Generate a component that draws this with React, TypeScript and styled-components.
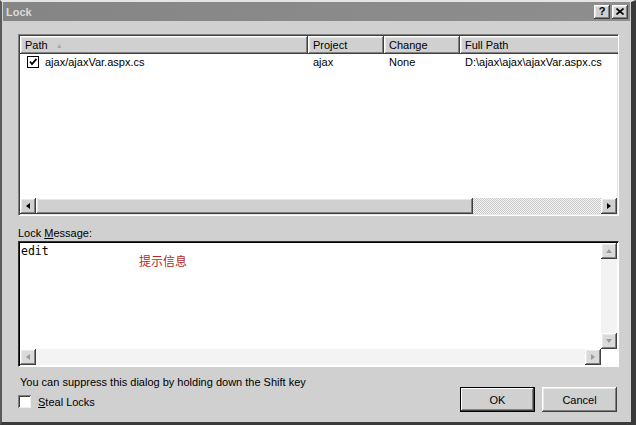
import React from "react";
import styled, { createGlobalStyle } from "styled-components";

const Global = createGlobalStyle`
  html, body { margin: 0; padding: 0; background: #d0d0d0; overflow: hidden; }
  * { box-sizing: border-box; }
`;

const FACE = "#d0d0d0";
const SHADOW = "#808080";
const DARK = "#404040";
const LIGHT = "#ffffff";
const FONT = `"Liberation Sans", Arial, sans-serif`;

const raised = `
  box-shadow: inset -1px -1px ${DARK}, inset 1px 1px ${LIGHT}, inset -2px -2px ${SHADOW}, inset 2px 2px #e8e8e8;
`;

const Window = styled.div`
  width: 636px;
  height: 425px;
  background: ${FACE};
  border-top: 2px solid #e4e4e4;
  border-left: 2px solid #5a5a5a;
  border-right: 5px solid #3a3a3a;
  border-bottom: 3px solid #3a3a3a;
  display: flex;
  flex-direction: column;
  font-family: ${FONT};
  font-size: 11px;
  color: #000;
`;

const TitleBar = styled.div`
  height: 19px;
  margin: 0 1px 0 1px;
  background: linear-gradient(to right, #858585, #8e8e8e);
  display: flex;
  align-items: center;
  padding: 0 2px 0 3px;
`;

const TitleText = styled.div`
  flex: 1;
  color: #dadada;
  font-weight: bold;
  font-size: 11px;
`;

const TitleButton = styled.div<{ $gap?: boolean }>`
  width: 16px;
  height: 14px;
  background: ${FACE};
  ${raised}
  margin-left: ${(p) => (p.$gap ? 2 : 0)}px;
  display: flex;
  align-items: center;
  justify-content: center;
  font-weight: bold;
  font-size: 11px;
  line-height: 1;
  color: #000;
`;

const Content = styled.div`
  flex: 1;
  display: flex;
  flex-direction: column;
  padding: 13px 11px 0 16px;
`;

const Sunken = styled.div`
  border: 1px solid;
  border-color: ${SHADOW} ${LIGHT} ${LIGHT} ${SHADOW};
  box-shadow: inset 1px 1px ${DARK}, inset -1px -1px #e6e6e6;
  background: #fff;
  padding: 1px;
  display: flex;
  flex-direction: column;
  overflow: hidden;
`;

const ListView = styled(Sunken)`
  width: 601px;
  height: 182px;
`;

const Header = styled.div`
  display: flex;
  height: 18px;
  flex-shrink: 0;
`;

const HeaderCell = styled.div<{ $w: number }>`
  width: ${(p) => p.$w}px;
  flex-shrink: 0;
  background: ${FACE};
  ${raised}
  padding: 0 5px;
  display: flex;
  align-items: center;
  gap: 8px;
  color: #000;
`;

const SortArrow = styled.span`
  color: #a8a8a8;
  font-size: 7px;
  line-height: 1;
`;

const Rows = styled.div`
  flex: 1;
  background: #fff;
`;

const Row = styled.div`
  display: flex;
  height: 15px;
  align-items: center;
`;

const Cell = styled.div<{ $w: number; $pad?: number }>`
  width: ${(p) => p.$w}px;
  flex-shrink: 0;
  padding-left: ${(p) => p.$pad ?? 5}px;
  display: flex;
  align-items: center;
  white-space: nowrap;
`;

const CheckBox = styled.div<{ $sunken?: boolean }>`
  width: 12px;
  height: 12px;
  background: #fff;
  border: ${(p) => (p.$sunken ? "none" : "1px solid #000")};
  ${(p) =>
    p.$sunken
      ? `width:13px;height:13px;box-shadow: inset 1px 1px ${SHADOW}, inset -1px -1px #eeeeee, inset 2px 2px ${DARK};`
      : ""}
  display: flex;
  align-items: center;
  justify-content: center;
  flex-shrink: 0;
`;

const HScroll = styled.div`
  height: 16px;
  display: flex;
  flex-shrink: 0;
`;

const VScroll = styled.div`
  width: 16px;
  display: flex;
  flex-direction: column;
  flex-shrink: 0;
`;

const ArrowBtn = styled.div<{ $dim?: boolean }>`
  width: 16px;
  height: 16px;
  flex-shrink: 0;
  background: ${(p) => (p.$dim ? "#dadada" : FACE)};
  ${raised}
  display: flex;
  align-items: center;
  justify-content: center;
`;

const Thumb = styled.div<{ $w: number }>`
  width: ${(p) => p.$w}px;
  background: ${FACE};
  ${raised}
  flex-shrink: 0;
`;

const Dither = styled.div`
  flex: 1;
  background: repeating-conic-gradient(#c8c8c8 0 25%, #f4f4f4 0 50%) 0 0 / 2px 2px;
`;

const PaleTrack = styled.div`
  flex: 1;
  background: #f3f3f3;
`;

const Label = styled.div`
  margin-top: 9px;
  height: 16px;
  line-height: 16px;
`;

const U = styled.span`
  text-decoration: underline;
`;

const TextBox = styled(Sunken)`
  width: 601px;
  height: 126px;
  border-color: #303030 #fff #fff #303030;
  box-shadow: inset 1px 1px #000;
`;

const TextBody = styled.div`
  flex: 1;
  display: flex;
  min-height: 0;
`;

const TextArea = styled.div`
  flex: 1;
  position: relative;
  padding: 1px 1px;
  font-family: "DejaVu Sans Mono", "Liberation Mono", monospace;
  font-size: 11.5px;
`;

const Hint = styled.span`
  position: absolute;
  left: 119px;
  top: 9px;
  color: #b02a2a;
  font-family: "Noto Sans CJK SC", sans-serif;
  font-size: 12px;
`;

const Corner = styled.div`
  width: 16px;
  height: 16px;
  background: #fff;
  flex-shrink: 0;
`;

const Footer = styled.div`
  display: flex;
  justify-content: space-between;
  align-items: flex-start;
  margin-top: 9px;
  padding-right: 3px;
`;

const FooterLeft = styled.div`
  display: flex;
  flex-direction: column;
  gap: 7px;
  padding-left: 2px;
`;

const CheckRow = styled.div`
  display: flex;
  align-items: center;
  gap: 7px;
  margin-left: -2px;
`;

const Buttons = styled.div`
  display: flex;
  gap: 7px;
  margin-top: 11px;
`;

const PushButton = styled.div<{ $default?: boolean }>`
  width: 75px;
  height: 25px;
  background: ${FACE};
  display: flex;
  align-items: center;
  justify-content: center;
  ${(p) =>
    p.$default
      ? `border: 1px solid #000; box-shadow: inset -1px -1px ${DARK}, inset 1px 1px ${LIGHT}, inset -2px -2px ${SHADOW};`
      : raised}
`;

const Tri = ({ dir, dim }: { dir: "l" | "r" | "u" | "d"; dim?: boolean }) => {
  const pts = {
    l: "5,1 1,4 5,7",
    r: "1,1 5,4 1,7",
    u: "1,5 4,1 7,5",
    d: "1,1 4,5 7,1",
  }[dir];
  const vert = dir === "u" || dir === "d";
  return (
    <svg width={vert ? 8 : 6} height={vert ? 6 : 8} viewBox={vert ? "0 0 8 6" : "0 0 6 8"}>
      <polygon points={pts} fill={dim ? "#9a9a9a" : "#000"} />
    </svg>
  );
};

export default function App() {
  return (
    <>
      <Global />
      <Window>
        <TitleBar>
          <TitleText>Lock</TitleText>
          <TitleButton>?</TitleButton>
          <TitleButton $gap>
            <svg width="8" height="7" viewBox="0 0 8 7">
              <path d="M0.5 0.5 L7.5 6.5 M7.5 0.5 L0.5 6.5" stroke="#000" strokeWidth="1.6" />
            </svg>
          </TitleButton>
        </TitleBar>
        <Content>
          <ListView>
            <Header>
              <HeaderCell $w={288}>
                Path <SortArrow>▲</SortArrow>
              </HeaderCell>
              <HeaderCell $w={76}>Project</HeaderCell>
              <HeaderCell $w={76}>Change</HeaderCell>
              <HeaderCell $w={160}>Full Path</HeaderCell>
            </Header>
            <Rows>
              <Row>
                <Cell $w={288} $pad={7}>
                  <CheckBox>
                    <svg width="10" height="10" viewBox="0 0 10 10">
                      <path d="M2 4.5 L4 7 L8.5 1.8" stroke="#000" strokeWidth="1.8" fill="none" />
                    </svg>
                  </CheckBox>
                  <span style={{ marginLeft: 6 }}>ajax/ajaxVar.aspx.cs</span>
                </Cell>
                <Cell $w={76}>ajax</Cell>
                <Cell $w={76}>None</Cell>
                <Cell $w={160}>D:\ajax\ajax\ajaxVar.aspx.cs</Cell>
              </Row>
            </Rows>
            <HScroll>
              <ArrowBtn>
                <Tri dir="l" />
              </ArrowBtn>
              <Thumb $w={437} />
              <Dither />
              <ArrowBtn>
                <Tri dir="r" />
              </ArrowBtn>
            </HScroll>
          </ListView>
          <Label>
            Lock <U>M</U>essage:
          </Label>
          <TextBox>
            <TextBody>
              <TextArea>
                edit
                <Hint>提示信息</Hint>
              </TextArea>
              <VScroll>
                <ArrowBtn $dim>
                  <Tri dir="u" dim />
                </ArrowBtn>
                <PaleTrack />
                <ArrowBtn $dim>
                  <Tri dir="d" dim />
                </ArrowBtn>
              </VScroll>
            </TextBody>
            <HScroll>
              <ArrowBtn $dim>
                <Tri dir="l" dim />
              </ArrowBtn>
              <PaleTrack />
              <ArrowBtn $dim>
                <Tri dir="r" dim />
              </ArrowBtn>
              <Corner />
            </HScroll>
          </TextBox>
          <Footer>
            <FooterLeft>
              <div>You can suppress this dialog by holding down the Shift key</div>
              <CheckRow>
                <CheckBox $sunken />
                <span>
                  <U>S</U>teal Locks
                </span>
              </CheckRow>
            </FooterLeft>
            <Buttons>
              <PushButton $default>OK</PushButton>
              <PushButton>Cancel</PushButton>
            </Buttons>
          </Footer>
        </Content>
      </Window>
    </>
  );
}
